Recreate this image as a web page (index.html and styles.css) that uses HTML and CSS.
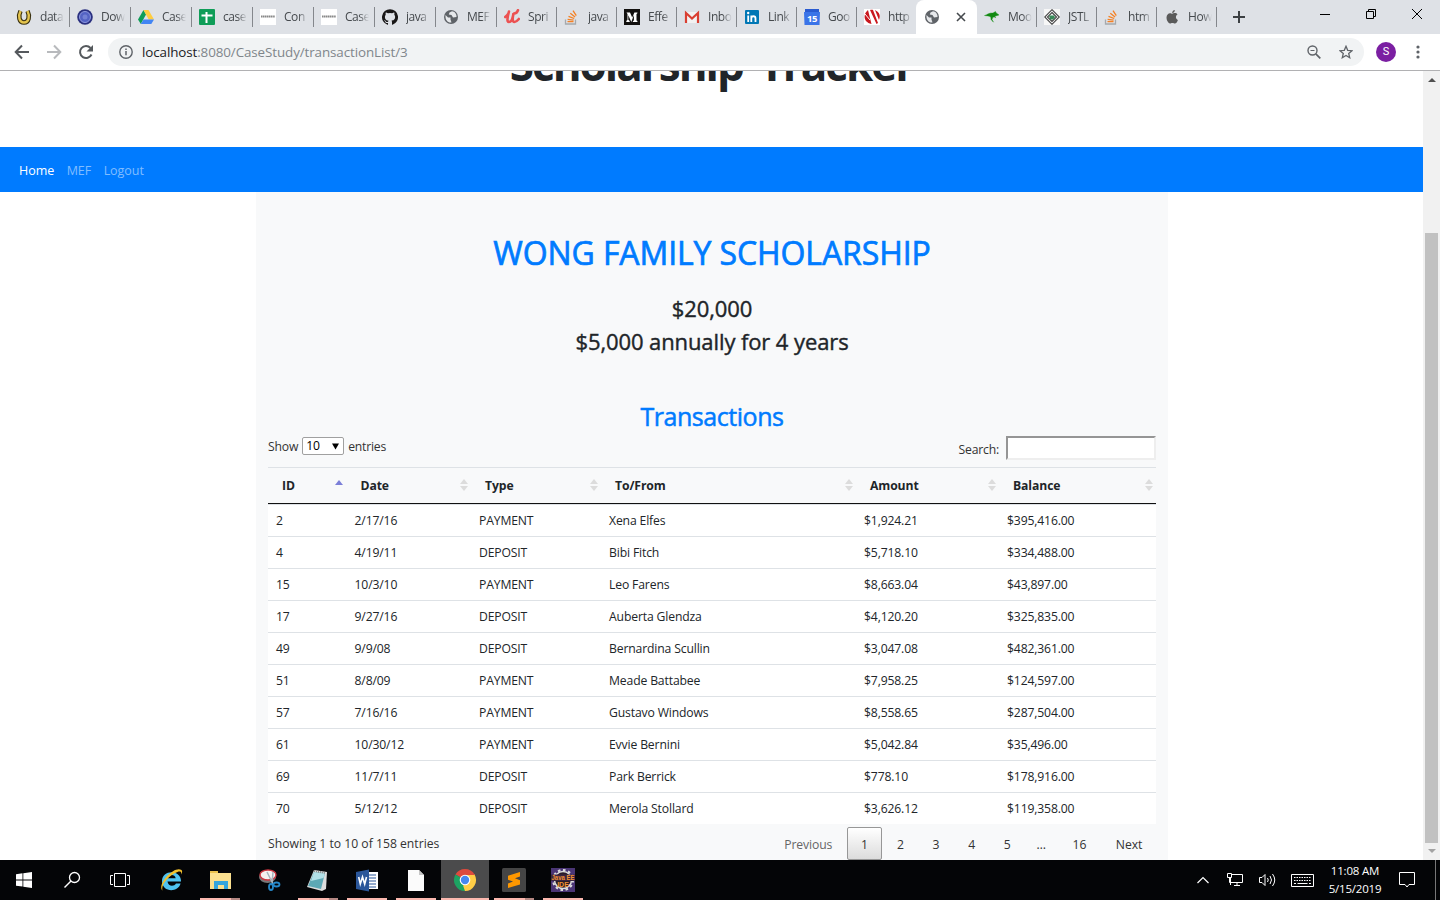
FILE: index.html
```html
<!DOCTYPE html>
<html lang="en">
<head>
<meta charset="utf-8">
<title>Scholarship Tracker</title>
<link rel="stylesheet" href="styles.css">
</head>
<body>
<svg class="defs" width="0" height="0">
  <symbol id="globe" viewBox="0 0 16 16"><circle cx="8" cy="8" r="7" fill="#5f6368"/><path d="M2.500 6 5 8.500h2.500v2l1 3C5 14 2 11 2.500 6ZM9 2.300 6.500 3.500 5.800 5.500 8.500 6 10 8.500l3.500-.5C13.800 5 11.500 2.500 9 2.300Z" fill="#e6e8eb"/></symbol>
  <symbol id="stack" viewBox="0 0 16 16"><path d="M1.500 10.500v4.500h10v-4.500" fill="none" stroke="#a5a9ad" stroke-width="1.300"/><path d="M3.500 12.700h6M3.600 10.300l6 .9M4.500 7.300l5.700 2.200M6.300 4.300l4.800 3.800M9 1.700l3.300 5" fill="none" stroke="#f48024" stroke-width="1.300"/></symbol>
  <symbol id="plat" viewBox="0 0 16 16"><path fill="#fff" d="M0 0h16v16H0z"/><path d="M1 7.500h14" stroke="#888" stroke-width="2" stroke-dasharray="1.500 .4"/></symbol>
</svg>

<div class="tabs">
  <div class="tab wide"><svg viewBox="0 0 16 16"><path d="M4.500 2C2 7 3 13.500 8 13.500S14 7 11.500 2" fill="none" stroke="#3b3210" stroke-width="4.600"/><path d="M4.500 2C2 7 3 13.500 8 13.500S14 7 11.500 2" fill="none" stroke="#e3c34d" stroke-width="2.400"/></svg><span>data</span></div>
  <div class="tab wide"><svg viewBox="0 0 16 16"><circle cx="8" cy="8" r="7.800" fill="#2a3080"/><circle cx="8" cy="8" r="5.500" fill="#5463c4" stroke="#8d98e0"/><circle cx="8" cy="8" r="2.500" fill="#7381d4"/></svg><span>Dow</span></div>
  <div class="tab wide"><svg viewBox="0 0 16 16"><path d="M5.500 1 0 10.500 2.800 15 8 5.500Z" fill="#0f9d58"/><path d="M5.500 1h5l5.500 9.500h-5.300Z" fill="#ffcd40"/><path d="M5.500 10.500H16L13.300 15H2.800Z" fill="#4285f4"/></svg><span>Case</span></div>
  <div class="tab wide"><svg viewBox="0 0 16 16"><rect width="16" height="16" rx="1" fill="#0f9d58"/><path d="M7.500 3v11M2.500 6.500h11" stroke="#fff" stroke-width="2"/></svg><span>case</span></div>
  <div class="tab wide"><svg><use href="#plat"/></svg><span>Con</span></div>
  <div class="tab wide"><svg><use href="#plat"/></svg><span>Case</span></div>
  <div class="tab wide"><svg viewBox="0 0 16 16"><path fill="#191717" d="M8 .2a8 8 0 0 0-2.530 15.590c.4.070.550-.170.550-.380v-1.490c-2.230.480-2.700-.950-2.700-.950-.360-.920-.890-1.170-.890-1.170-.730-.5.050-.490.050-.490.810.060 1.230.830 1.230.830.720 1.230 1.880.870 2.340.660.070-.520.280-.870.510-1.070-1.780-.2-3.640-.890-3.640-3.950 0-.870.310-1.590.820-2.150-.080-.2-.360-1.020.080-2.120 0 0 .670-.210 2.200.820a7.600 7.600 0 0 1 4 0c1.530-1.030 2.200-.820 2.200-.820.440 1.100.160 1.920.080 2.120.510.560.820 1.270.820 2.150 0 3.070-1.870 3.750-3.650 3.950.290.250.540.730.540 1.480v2.200c0 .210.140.460.550.380A8 8 0 0 0 8 .2Z"/></svg><span>java</span></div>
  <div class="tab wide"><svg><use href="#globe"/></svg><span>MEF</span></div>
  <div class="tab"><svg viewBox="0 0 16 16"><path d="M1.200 8C3.500 6 5 4 5 2.500M4.800 3C3.500 8 2.500 13 5 13s4-5 4.500-8.500C8.500 9 8 13 10.500 13c2 0 3-1.500 4.300-3M10 4.500C12 4.500 13.500 3 14 1.200" fill="none" stroke="#ec5252" stroke-width="2.600" stroke-linecap="round"/></svg><span>Spri</span></div>
  <div class="tab"><svg><use href="#stack"/></svg><span>java</span></div>
  <div class="tab"><svg viewBox="0 0 16 16"><path fill="#12100e" d="M0 0h16v16H0z"/><path d="M2.500 3.500h3.500l2.200 5 2.200-5h3v.8l-.9.700v6.500l.9.600v.9H8.900v-.9l1-.6V6L7.300 13 4.300 6.300v4.400l1.400 1.400v.9H2.300v-.9l1.200-1.400V5Z" fill="#fff"/></svg><span>Effe</span></div>
  <div class="tab"><svg viewBox="0 0 16 16"><path fill="#f2f2f2" d="M1 3h14v11H1z"/><path d="M2 14V4l6 5.500L14 4v10" fill="none" stroke="#d93f32" stroke-width="2.200"/></svg><span>Inbo</span></div>
  <div class="tab"><svg viewBox="0 0 16 16"><rect x="1" y="1" width="14" height="14" rx="1" fill="#0077b5"/><path d="M4.200 6.500V13M7.300 13V6.500M7.300 9.500c0-3 4.200-3 4.200 0V13" fill="none" stroke="#fff" stroke-width="1.800"/><circle cx="4.200" cy="4" r="1.200" fill="#fff"/></svg><span>Link</span></div>
  <div class="tab"><svg viewBox="0 0 16 16"><path fill="#2a5bd0" d="M1 0h14v4H1z"/><path fill="#3b74e8" d="M0 3h16l-.5 13H.5Z"/><text class="cal-day" x="8" y="12.800" text-anchor="middle">15</text></svg><span>Goo</span></div>
  <div class="tab last"><svg viewBox="0 0 16 16"><path fill="#fff" d="M0 0h16v16H0z"/><path d="M4 1 7.500 15C-1 13-1 5 4 1ZM6 1c2-.5 3 0 3 0l5 13-1.500 1ZM11 1c6 3 5 7 4 10Z" fill="#c9181e"/><path d="m1 5 5 6" stroke="#fff"/></svg><span>http</span></div>
  <div class="tab active"><svg><use href="#globe"/></svg><svg class="close" viewBox="0 0 10 10"><path d="m1 1 8 8M9 1 1 9" stroke="#45494d" stroke-width="1.600"/></svg></div>
  <div class="tab"><svg viewBox="0 0 16 16"><path d="M.5 6.500C3 6 5 3.500 9 4l2.500-1.500.5 1.200L15 6l-2.500.7-1.500.3.5 2-1.200-1.200-1.600.7L8 10.500l1.500 2.700-2.500-2.700-.2-2.500C4.500 6.500 3 7 .5 6.500Z" fill="#128a12" stroke="#128a12" stroke-width=".4"/></svg><span>Moo</span></div>
  <div class="tab"><svg viewBox="0 0 16 16"><path fill="#f7f7f7" d="M0 0h16v16H0z"/><path d="m8 .7 7.300 7.300L8 15.300.7 8ZM8 3.500 12.500 8 8 12.500 3.500 8Z" fill="none" stroke="#444" stroke-width="1.100"/><path d="M5 6.500h5l1 2-2 2H6Z" fill="#398a58"/></svg><span>JSTL</span></div>
  <div class="tab"><svg><use href="#stack"/></svg><span>htm</span></div>
  <div class="tab"><svg viewBox="0 0 16 16"><path d="M10.800 1c.1 1.700-1.200 3-2.700 3 0-1.500 1.200-2.800 2.700-3ZM8.200 4.800c.7 0 1.500-.7 2.700-.7 1 0 2 .5 2.600 1.400-2.300 1.400-1.900 4.500.4 5.400-.5 1.500-1.700 3.700-3 3.700-.9 0-1.300-.6-2.500-.6s-1.600.6-2.400.6C4.500 14.600 2.500 11.500 2.500 8.600c0-2.800 1.800-4.400 3.500-4.400 1 0 1.700.6 2.200.6Z" fill="#5a5a5a"/></svg><span>How</span></div>
  <svg class="plus" viewBox="0 0 12 12"><path d="M6 0v12M0 6h12" stroke="#3c4043" stroke-width="2"/></svg>
  <div class="winbtns">
    <svg viewBox="0 0 10 10"><path d="M0 5.500h10" stroke="#000"/></svg>
    <svg viewBox="0 0 10 10"><path d="M.5 2.500h7v7h-7zM2.500 2.500v-2h7v7h-2" fill="none" stroke="#000"/></svg>
    <svg viewBox="0 0 10 10"><path d="m0 0 10 10M10 0 0 10" stroke="#000"/></svg>
  </div>
</div>

<div class="toolbar">
  <svg class="tool" viewBox="0 0 16 16"><path d="M15 8H2M8 1.500 1.700 8 8 14.500" fill="none" stroke="#55595d" stroke-width="2"/></svg>
  <svg class="tool" viewBox="0 0 16 16"><path d="M1 8h13M8 1.500 14.300 8 8 14.500" fill="none" stroke="#b8babd" stroke-width="2"/></svg>
  <svg class="tool" viewBox="0 0 16 16"><path d="M13.500 10.500A6 6 0 1 1 12.500 4" fill="none" stroke="#55595d" stroke-width="2"/><path d="M15 1v6.500H8.500Z" fill="#55595d"/></svg>
  <div class="omnibox">
    <svg class="info" viewBox="0 0 14 14"><circle cx="7" cy="7" r="6.200" fill="none" stroke="#5f6368" stroke-width="1.400"/><path d="M7 6v4.300M7 3.500v1.500" stroke="#5f6368" stroke-width="1.500"/></svg>
    <div class="url"><b>localhost</b>:8080/CaseStudy/transactionList/3</div>
    <svg class="mag" viewBox="0 0 14 14"><circle cx="5.500" cy="5.500" r="4.500" fill="none" stroke="#5f6368" stroke-width="1.400"/><path d="M3.500 5.500h4" stroke="#5f6368"/><path d="m8.800 8.800 4.500 4.500" stroke="#5f6368" stroke-width="1.700"/></svg>
    <svg class="star" viewBox="0 0 14 14"><path d="m7 1.300 1.700 4 4.300.4-3.300 2.800 1 4.200L7 10.500l-3.700 2.200 1-4.200L1 5.700l4.300-.4Z" fill="none" stroke="#5f6368" stroke-width="1.300"/></svg>
  </div>
  <div class="avatar">S</div>
  <svg class="dots" viewBox="0 0 4 14"><g fill="#5f6368"><circle cx="2" cy="2" r="1.600"/><circle cx="2" cy="7" r="1.600"/><circle cx="2" cy="12" r="1.600"/></g></svg>
</div>

<div class="viewport">
  <div class="page">
    <header class="masthead"><h1>Scholarship Tracker</h1></header>
    <nav class="navbar"><a class="on">Home</a><a>MEF</a><a>Logout</a></nav>
    <main class="container">
      <h2>WONG FAMILY SCHOLARSHIP</h2>
      <h4>$20,000</h4>
      <h4>$5,000 annually for 4 years</h4>
      <h3>Transactions</h3>
      <div class="controls">
        <div class="length"><span>Show</span><span class="select"><span>10</span><svg viewBox="0 0 7 7"><path d="M0 .5h7L3.500 6.500Z"/></svg></span><span>entries</span></div>
        <label class="search"><span>Search:</span><input type="text"></label>
      </div>
      <div class="table">
        <div class="row head"><div class="asc">ID</div><div>Date</div><div>Type</div><div>To/From</div><div>Amount</div><div>Balance</div></div>
        <div class="row"><div>2</div><div>2/17/16</div><div>PAYMENT</div><div>Xena Elfes</div><div>$1,924.21</div><div>$395,416.00</div></div>
        <div class="row"><div>4</div><div>4/19/11</div><div>DEPOSIT</div><div>Bibi Fitch</div><div>$5,718.10</div><div>$334,488.00</div></div>
        <div class="row"><div>15</div><div>10/3/10</div><div>PAYMENT</div><div>Leo Farens</div><div>$8,663.04</div><div>$43,897.00</div></div>
        <div class="row"><div>17</div><div>9/27/16</div><div>DEPOSIT</div><div>Auberta Glendza</div><div>$4,120.20</div><div>$325,835.00</div></div>
        <div class="row"><div>49</div><div>9/9/08</div><div>DEPOSIT</div><div>Bernardina Scullin</div><div>$3,047.08</div><div>$482,361.00</div></div>
        <div class="row"><div>51</div><div>8/8/09</div><div>PAYMENT</div><div>Meade Battabee</div><div>$7,958.25</div><div>$124,597.00</div></div>
        <div class="row"><div>57</div><div>7/16/16</div><div>PAYMENT</div><div>Gustavo Windows</div><div>$8,558.65</div><div>$287,504.00</div></div>
        <div class="row"><div>61</div><div>10/30/12</div><div>PAYMENT</div><div>Evvie Bernini</div><div>$5,042.84</div><div>$35,496.00</div></div>
        <div class="row"><div>69</div><div>11/7/11</div><div>DEPOSIT</div><div>Park Berrick</div><div>$778.10</div><div>$178,916.00</div></div>
        <div class="row"><div>70</div><div>5/12/12</div><div>DEPOSIT</div><div>Merola Stollard</div><div>$3,626.12</div><div>$119,358.00</div></div>
      </div>
      <div class="foot">
        <div class="status">Showing 1 to 10 of 158 entries</div>
        <div class="pager"><a class="prev">Previous</a><a class="cur">1</a><a>2</a><a>3</a><a>4</a><a>5</a><a class="gap">…</a><a class="two">16</a><a class="next">Next</a></div>
      </div>
    </main>
  </div>
  <div class="scrollbar"><i class="up"></i><i class="thumb"></i><i class="down"></i></div>
</div>

<div class="taskbar">
  <div class="sys"><svg width="16" height="16" viewBox="0 0 16 16"><path fill="#fff" d="M0 2.200 6.500 1.300v6.200H0zM7.300 1.200 16 0v7.500H7.300zM0 8.400h6.500v6.200L0 13.700zM7.300 8.400H16V16l-8.700-1.200z"/></svg></div>
  <div class="sys"><svg width="18" height="18" viewBox="0 0 18 18"><circle cx="11.500" cy="6.500" r="5" fill="none" stroke="#fff" stroke-width="1.300"/><path d="m8 10-6.500 6.500" stroke="#fff" stroke-width="1.400"/></svg></div>
  <div class="sys"><svg width="20" height="16" viewBox="0 0 20 16"><path d="M4.500 1.500h11v13h-11zM3 3.500H.5v9H3M17 3.500h2.500v9H17" fill="none" stroke="#fff"/></svg></div>
  <div class="apps">
    <div class="app"><svg viewBox="0 0 24 24"><path d="M22 13.500H8.500c.5 5 6.500 5.500 8.500 2h4.600C19 25 3 24.500 3 13 3 1 22.500 1.500 22 13.500ZM8.700 10.300h8C16 6 9.500 6 8.700 10.300Z" fill="#4fc3f0"/><path d="M3.500 22.500C-2.500 17 15-3 22.500 2c1.300 1 .3 3.500-.5 4.500.8-2.500-.5-3.500-3.500-2.500C10 7 1.500 17 3.500 22.500Z" fill="#f2c12e"/></svg></div>
    <div class="app run multi"><svg viewBox="0 0 24 24"><path fill="#eac14d" d="M2 3h8v4H2z"/><path fill="#fbe08f" d="M2 5h21v16H2z"/><path d="M6 21v-8h14v8h-4v-4h-6v4Z" fill="#35a5dd"/></svg></div>
    <div class="app"><svg viewBox="0 0 24 24"><ellipse cx="10.500" cy="9" rx="8.500" ry="6" fill="#777"/><ellipse cx="11" cy="7" rx="8" ry="5" fill="#f5f0f0" stroke="#cc3540" stroke-width="1.400"/><path d="m10 4 6 12M16 4l-1 12" stroke="#a7b4bd" stroke-width="1.500"/><g fill="none" stroke="#2688c9" stroke-width="1.800"><ellipse cx="14" cy="19" rx="2" ry="3"/><ellipse cx="19.500" cy="16.500" rx="3" ry="2"/></g></svg></div>
    <div class="app run multi"><svg viewBox="0 0 24 24"><path fill="#ddd" d="m8 2 13 2-1 17-4 2L1 19Z"/><path fill="#5da8b5" d="m8 4 11 1-4 16L2 18Z"/><path fill="#b2e0e7" d="m8 4 11 1-1.500 5L5 13Z"/><path d="m8 3 11 2" stroke="#888" stroke-width="2" stroke-dasharray="1 1"/></svg></div>
    <div class="app run"><svg viewBox="0 0 24 24"><path fill="#fff" d="M12 4h11v17H12z"/><path d="M14 7h7M14 10h7M14 13h7M14 16h7M14 19h7" stroke="#2b579a" stroke-width="1.200"/><path fill="#2b579a" d="m1 4 13-2.500v22L1 21Z"/><path d="m3.700 9 1.600 7L7.500 9l2.200 7L11.500 9" fill="none" stroke="#fff" stroke-width="1.600"/></svg></div>
    <div class="app run"><svg viewBox="0 0 24 24"><path fill="#fbfbfb" d="M4 2h11l5 5v16H4z"/><path fill="#c5c5c5" d="M15 2v5h5z"/></svg></div>
    <div class="app run focus"><svg viewBox="0 0 24 24"><path d="M12 12 2.470 6.500A11 11 0 0 1 21.530 6.500Z" fill="#dd4b3e"/><path d="M12 12 21.530 6.500A11 11 0 0 1 12 23Z" fill="#ffcd46"/><path d="M12 12v11A11 11 0 0 1 2.470 6.500Z" fill="#1da362"/><path d="M12 6.500h9.530L17 14Z" fill="#ffcd46"/><path d="M12 6.500h9.500" stroke="#dd4b3e"/><path d="M16.500 14.500 12 23l-2-5.500Z" fill="#ffcd46"/><circle cx="12" cy="12" r="5.300" fill="#fff"/><circle cx="12" cy="12" r="4.200" fill="#4688f1"/></svg></div>
    <div class="app run multi"><svg viewBox="0 0 24 24"><rect width="24" height="24" rx="1.500" fill="#454545"/><path d="M18 4v4.500l-5 1.800 5 1.900v4.300L6 20v-4.500l5-1.900-5-1.900V7.800Z" fill="#ff9800"/></svg></div>
    <div class="app run"><svg viewBox="0 0 24 24"><path fill="#4a3575" d="M0 0h24v24H0z"/><circle cx="12" cy="12" r="8.500" fill="#2a1c28" stroke="#ddd" stroke-width="1.500"/><circle cx="12" cy="12" r="10" fill="none" stroke="#ddd" stroke-width="2" stroke-dasharray="2.600 2.600"/><path d="M0 6.500h24v6.500H0z" fill="#3a2540"/><text class="ee" x=".5" y="12" textLength="23" lengthAdjust="spacingAndGlyphs">Java EE</text><text class="ee" x="12" y="18.500" text-anchor="middle">IDE</text></svg></div>
  </div>
  <div class="tray">
    <svg width="12" height="8" viewBox="0 0 12 8"><path d="m.5 7 5.500-5.500L11.500 7" fill="none" stroke="#fff" stroke-width="1.200"/></svg>
    <svg width="16" height="14" viewBox="0 0 16 14"><path d="M5 1.500h10.500v8H5M3.500 5v7M7 12.500h6M10 9.500v3M.5.500h4v4h-4zM2.500 4.500v5H5" fill="none" stroke="#fff"/></svg>
    <svg width="17" height="14" viewBox="0 0 17 14"><path d="M.5 4.500H3l3-3v11l-3-3H.5ZM8.500 5q1.500 2 0 4M11 3q3 4 0 8M13.500 1q4.500 6 0 12" fill="none" stroke="#fff"/></svg>
    <svg width="23" height="13" viewBox="0 0 23 13"><path d="M.5.500h22v12H.5z" fill="none" stroke="#fff"/><path d="M3 3.500h17M3 6.500h17" stroke="#fff" stroke-width="1.200" stroke-dasharray="1.500 1"/><path d="M3 9.500h2M6.500 9.500h10M18 9.500h2" stroke="#fff"/></svg>
    <div class="clock"><span>11:08 AM</span><span>5/15/2019</span></div>
    <svg width="16" height="17" viewBox="0 0 16 17"><path d="M.5.500h15v12H10l-2 2.500-2-2.500H.5Z" fill="none" stroke="#fff"/></svg>
  </div>
</div>
</body>
</html>
```
FILE: styles.css
```css
* { box-sizing: border-box; }
body { margin: 0; width: 1440px; height: 900px; overflow: hidden; background: #fff; color: #212529; font: 12.2px/20px "Open Sans", "Noto Sans", sans-serif; }
svg { display: block; flex: none; }
.defs { position: absolute; }

.tabs { display: flex; height: 34px; padding-left: 9px; background: #dee1e6; }
.tab { position: relative; display: flex; align-items: center; gap: 8px; width: 60px; height: 34px; padding-left: 7px; color: #45494d; font-size: 12px; letter-spacing: -.45px; }
.tab.wide { width: 61px; }
.tab svg { width: 16px; height: 16px; }
.tab::after { content: ""; position: absolute; right: 0; top: 7px; width: 1px; height: 20px; background: #84878c; }
.tab.last::after, .tab.active::after { display: none; }
.tab span { width: 24px; overflow: hidden; white-space: nowrap; -webkit-mask-image: linear-gradient(90deg, #000 60%, transparent); mask-image: linear-gradient(90deg, #000 60%, transparent); }
.tab.active { width: 61px; margin-left: -1px; padding-left: 8px; background: #fff; border-radius: 8px 8px 0 0; gap: 16px; }
.tab svg.close { width: 10px; height: 10px; }
.cal-day { font: bold 9.5px "Open Sans", sans-serif; fill: #fff; }
.plus { width: 12px; height: 12px; margin: 11px 0 0 16px; }
.winbtns { display: flex; gap: 36px; margin: 9px 0 0 75px; }
.winbtns svg { width: 10px; height: 10px; }

.toolbar { display: flex; align-items: center; height: 37px; padding-left: 14px; border-bottom: 1px solid #b1b1b3; background: #fff; }
.tool { width: 16px; height: 16px; margin-right: 16px; }
.omnibox { display: flex; align-items: center; width: 1256px; height: 28px; margin-left: -2px; padding: 0 11px; border-radius: 14px; background: #f1f3f4; }
.info { width: 14px; height: 14px; margin-right: 9px; }
.url { font-size: 13.4px; letter-spacing: -.1px; color: #80868b; }
.url b { font-weight: 400; color: #202124; }
.mag { width: 14px; height: 14px; margin-left: auto; margin-right: 18px; }
.star { width: 14px; height: 14px; }
.avatar { width: 20px; height: 20px; margin-left: 12px; border-radius: 50%; background: #7b1fa2; color: #fff; font: 11px/20px Roboto, sans-serif; text-align: center; }
.dots { width: 4px; height: 14px; margin-left: 20px; }

.viewport { display: flex; height: 789px; }
.page { width: 1423px; height: 789px; overflow: hidden; }
.masthead { height: 76px; overflow: hidden; }
h1, h2, h3, h4 { margin: 0; text-align: center; white-space: nowrap; }
h1 { margin-top: -34px; font-size: 44px; font-weight: 700; line-height: 54px; letter-spacing: -2px; word-spacing: 7px; }
.navbar { display: flex; align-items: center; gap: 12.500px; height: 45px; padding: 2px 19px 0; background: #007bff; color: #80bdff; font-size: 12.500px; letter-spacing: -.05px; }
.navbar .on { color: #fff; }
.container { width: 912px; height: 668px; margin-left: 256px; padding: 42px 12px 0; background: #f8f9fa; }
h2, h3, h4 { font-weight: 400; }
h2 { font-size: 32px; line-height: 38px; letter-spacing: -.1px; color: #007bff; -webkit-text-stroke: .7px #007bff; }
h4 { font-size: 22px; line-height: 27px; margin-top: 23px; letter-spacing: -.1px; -webkit-text-stroke: .4px #212529; }
h4 + h4 { margin-top: 6px; }
h3 { font-size: 25px; line-height: 31px; margin-top: 46px; letter-spacing: -.45px; color: #007bff; -webkit-text-stroke: .5px #007bff; }

.controls { display: flex; justify-content: space-between; height: 35px; padding-top: 4px; color: #333; letter-spacing: -.2px; }
.length { display: flex; align-items: center; gap: 4px; height: 20px; }
.length > span:not(.select) { padding-top: 2px; }
.select { display: flex; align-items: center; justify-content: space-between; width: 42px; height: 18px; padding: 0 4px 0 3px; border: 1px solid #a0a0a0; border-radius: 2px; background: #fff; color: #000; }
.select svg { width: 7px; height: 7px; }
.search { display: flex; align-items: center; gap: 7px; height: 24px; }
.search span { padding-top: 3px; }
.search input { width: 150px; height: 24px; padding: 0; border: 2px solid; border-color: #959595 #eee #eee #959595; background: #fff; }

.row { display: grid; grid-template-columns: 78.500px 124.500px 130px 255px 143px 157px; height: 32px; border-top: 1px solid #dee2e6; background: #fff; line-height: 31px; letter-spacing: -.15px; }
.row > div { padding-left: 8px; white-space: nowrap; }
.head { height: 37px; border-bottom: 1px solid #111; background: transparent; font-weight: 700; line-height: 35px; letter-spacing: -.1px; }
.head > div { position: relative; padding-left: 14px; }
.head > div::before, .head > div::after { content: ""; position: absolute; right: 3.500px; border: 4px solid transparent; }
.head > div::before { top: 7px; border-bottom: 5px solid #dcdcdc; }
.head > div::after { top: 18px; border-top: 5px solid #dcdcdc; }
.head > .asc::before { top: 8px; border-bottom-color: #7b7fd8; }
.head > .asc::after { display: none; }

.foot { display: flex; justify-content: space-between; color: #333; }
.status { padding-top: 10px; }
.pager { display: flex; gap: 1.600px; padding-top: 3px; line-height: 35px; text-align: center; letter-spacing: -.1px; }
.pager a { width: 34px; height: 33px; }
.pager .prev { width: 74px; color: #666; }
.pager .cur { width: 35px; border: 1px solid #979797; border-radius: 2px; background: linear-gradient(#fff, #dcdcdc); line-height: 34px; }
.pager .gap { width: 31px; }
.pager .two { width: 42px; }
.pager .next { width: 54px; }

.scrollbar { display: flex; flex-direction: column; align-items: center; width: 17px; background: #f1f1f1; }
.up { margin-top: 7px; border: 4px solid transparent; border-top: 0; border-bottom: 4px solid #505050; }
.thumb { width: 13px; height: 610px; margin-top: 151px; background: #c1c1c1; }
.down { margin-top: 6px; border: 4px solid transparent; border-bottom: 0; border-top: 4px solid #a3a3a3; }

.taskbar { display: flex; height: 40px; background: #040507; color: #fff; }
.sys { display: flex; align-items: center; justify-content: center; width: 48px; }
.apps { display: flex; gap: 1px; margin-left: 3px; }
.app { position: relative; display: flex; align-items: center; justify-content: center; width: 48px; }
.app svg { width: 24px; height: 24px; }
.app.focus { background: #4b4b4c; }
.run::after { content: ""; position: absolute; left: 4px; right: 4px; bottom: 0; height: 2px; background: #fbb8af; }
.focus::after { left: 0; right: 0; }
.multi::after { background: linear-gradient(90deg, #fbb8af 31px, #b58883 31px); }
.ee { font: bold 7px "Liberation Sans", sans-serif; fill: #f29132; }
.tray { display: flex; align-items: center; margin-left: auto; padding-right: 20px; border-right: 1px solid #777; margin-right: 4px; }
.tray svg:nth-child(2) { margin-left: 18px; }
.tray svg:nth-child(3) { margin-left: 16px; }
.tray svg:nth-child(4) { margin-left: 15px; }
.clock { display: flex; flex-direction: column; align-items: center; justify-content: center; width: 60px; margin: 0 14px 0 11px; font-size: 11.500px; line-height: 18px; letter-spacing: -.2px; }
```
